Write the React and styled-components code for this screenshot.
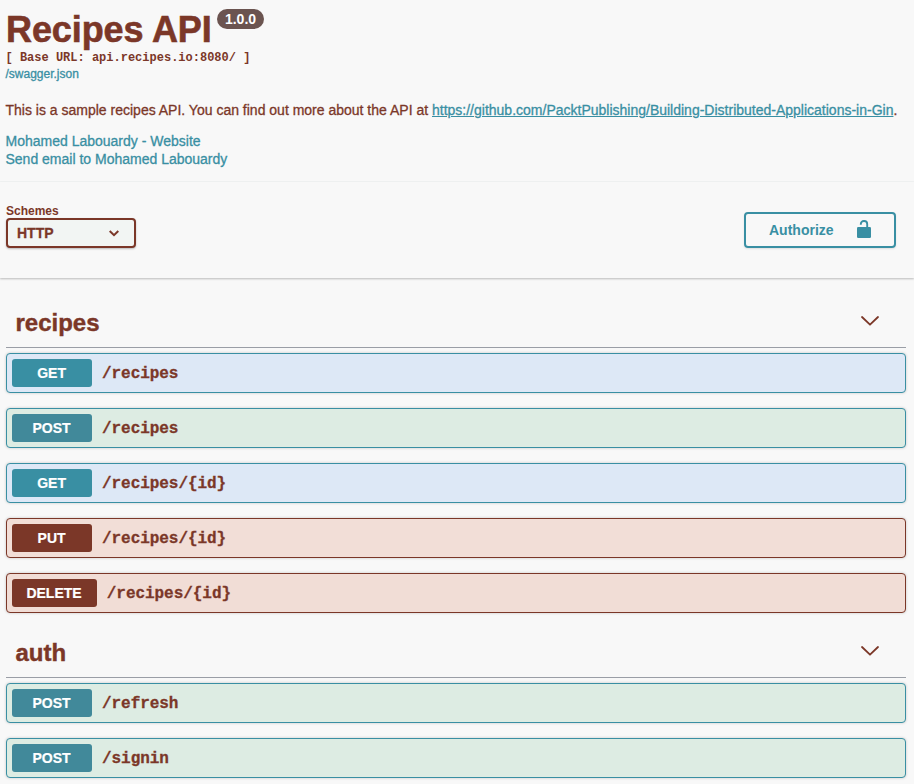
import React from "react";
import styled, { createGlobalStyle } from "styled-components";

const brown = "#7b3728";
const teal = "#398fa3";

const Global = createGlobalStyle`
  * { box-sizing: border-box; }
  body { margin: 0; background: #f8f8f8; color: ${brown}; font-family: "Liberation Sans", Arial, sans-serif; overflow: hidden; }
`;

const Page = styled.div`
  height: 784px;
  overflow: hidden;
`;

const Info = styled.header`
  height: 182px;
  padding: 9px 0 0 5.5px;
  border-bottom: 1px solid #f2f4f4;
`;

const TitleRow = styled.div`
  display: flex;
  align-items: flex-start;
  height: 41px;
`;

const Title = styled.h1`
  margin: 0;
  width: 211.5px;
  padding-left: 0.5px;
  font-size: 36px;
  line-height: 41px;
  letter-spacing: -0.1px;
  white-space: nowrap;
  -webkit-text-stroke: 0.6px ${brown};
`;

const Version = styled.span`
  width: 47px;
  height: 20px;
  border-radius: 10px;
  background: #6b5450;
  color: #fff;
  font-size: 14px;
  font-weight: 700;
  line-height: 20px;
  text-align: center;
`;

const BaseUrl = styled.pre`
  margin: 0;
  font: 700 12px/16px "Liberation Mono", monospace;
`;

const Link = styled.a`
  color: ${teal};
  -webkit-text-stroke: 0.3px ${teal};
`;

const SpecLink = styled(Link)`
  display: block;
  font-size: 12px;
  line-height: 16px;
`;

const Description = styled.p`
  margin: 20px 0 0;
  font-size: 14px;
  line-height: 17px;
  white-space: nowrap;
  -webkit-text-stroke: 0.3px ${brown};
`;

const UrlLink = styled(Link)`
  text-decoration: underline;
`;

const Contact = styled.div`
  display: flex;
  flex-direction: column;
  margin-top: 13px;
  font-size: 14px;
  line-height: 18px;
`;

const SchemeBar = styled.section`
  display: flex;
  justify-content: space-between;
  height: 96px;
  padding: 22px 18px 0 6px;
  background: #f8f8f8;
  box-shadow: 0 1px 2px rgba(0, 0, 0, 0.25);
`;

const SchemeLabel = styled.label`
  display: flex;
  flex-direction: column;
  font-size: 12px;
  font-weight: 700;
  line-height: 14px;
`;

const SchemeSelect = styled.button`
  display: flex;
  align-items: center;
  justify-content: space-between;
  width: 130px;
  height: 30px;
  padding: 0 15px 0 9px;
  border: 2px solid ${brown};
  border-radius: 4px;
  background: #f2f5f3;
  box-shadow: 0 1px 2px rgba(0, 0, 0, 0.25);
  color: ${brown};
  font: 700 14px/26px "Liberation Sans", sans-serif;
  -webkit-text-stroke: 0.3px ${brown};
`;

const AuthorizeButton = styled.button`
  display: flex;
  align-items: center;
  justify-content: space-between;
  width: 152px;
  height: 36px;
  margin-top: 8px;
  padding: 0 23px 0 23px;
  border: 2px solid ${teal};
  border-radius: 4px;
  background: transparent;
  box-shadow: 0 1px 2px rgba(0, 0, 0, 0.1);
  color: ${teal};
  font: 700 14px/32px "Liberation Sans", sans-serif;

  svg { margin-top: -2px; }
`;

const Operations = styled.main`
  padding: 20px 8px 0 6px;
`;

const TagHeader = styled.h2`
  display: flex;
  align-items: center;
  justify-content: space-between;
  height: 50px;
  margin: 0 0 5px;
  padding: 0 27px 0 9.5px;
  border-bottom: 1px solid #9a9ea6;
  font-size: 24px;
  line-height: 49px;
  -webkit-text-stroke: 0.4px ${brown};

  svg { margin-top: -3px; }
`;

const kinds = {
  GET: { accent: teal, chip: teal, fill: "#dde8f6" },
  POST: { accent: teal, chip: "#41899a", fill: "#ddece3" },
  PUT: { accent: brown, chip: brown, fill: "#f2ded7" },
  DELETE: { accent: brown, chip: brown, fill: "#f1ddd6" },
};

const Operation = styled.div`
  display: flex;
  align-items: center;
  height: 40px;
  margin-bottom: 15px;
  padding: 5px;
  border: 1px solid ${(p) => kinds[p.$kind].accent};
  border-radius: 4px;
  background: ${(p) => kinds[p.$kind].fill};
  box-shadow: 0 0 3px rgba(0, 0, 0, 0.2);
`;

const Method = styled.span`
  min-width: 80px;
  height: 28px;
  padding: 0 15.2px 0 14.4px;
  border-radius: 3px;
  background: ${(p) => kinds[p.$kind].chip};
  color: #fff;
  font-size: 14px;
  font-weight: 700;
  line-height: 28px;
  text-align: center;
  -webkit-text-stroke: 0.2px #fff;
`;

const Path = styled.span`
  padding: 1px 10px 0;
  font: 700 16px/28px "Liberation Mono", monospace;
  letter-spacing: -0.05px;
  -webkit-text-stroke: 0.3px ${brown};
`;

const sections = [
  {
    name: "recipes",
    operations: [
      ["GET", "/recipes"],
      ["POST", "/recipes"],
      ["GET", "/recipes/{id}"],
      ["PUT", "/recipes/{id}"],
      ["DELETE", "/recipes/{id}"],
    ],
  },
  {
    name: "auth",
    operations: [
      ["POST", "/refresh"],
      ["POST", "/signin"],
    ],
  },
];

const SmallChevron = () => (
  <svg width="10" height="7" viewBox="0 0 10 7" fill="none" stroke={brown} strokeWidth="2">
    <path d="M.7 1 5 5.2 9.3 1" />
  </svg>
);

const Chevron = () => (
  <svg width="18" height="10" viewBox="0 0 18 10" fill="none" stroke={brown} strokeWidth="1.8" strokeLinecap="round" strokeLinejoin="round">
    <path d="M1 1 9 8.7 17 1" />
  </svg>
);

const Unlocked = () => (
  <svg width="14" height="18" viewBox="0 0 14 18">
    <path d="M3.8 4.8V4a3 3 0 0 1 3-3h.4a3 3 0 0 1 3 3v4" fill="none" stroke={teal} strokeWidth="1.9" />
    <rect y="7" width="14" height="11" rx="1.2" fill={teal} />
  </svg>
);

export default function App() {
  return (
    <Page>
      <Global />
      <Info>
        <TitleRow>
          <Title>Recipes API</Title>
          <Version>1.0.0</Version>
        </TitleRow>
        <BaseUrl>[ Base URL: api.recipes.io:8080/ ]</BaseUrl>
        <SpecLink>/swagger.json</SpecLink>
        <Description>
          This is a sample recipes API. You can find out more about the API at{" "}
          <UrlLink>https://github.com/PacktPublishing/Building-Distributed-Applications-in-Gin</UrlLink>.
        </Description>
        <Contact>
          <Link>Mohamed Labouardy - Website</Link>
          <Link>Send email to Mohamed Labouardy</Link>
        </Contact>
      </Info>
      <SchemeBar>
        <SchemeLabel>
          Schemes
          <SchemeSelect>HTTP <SmallChevron /></SchemeSelect>
        </SchemeLabel>
        <AuthorizeButton>Authorize <Unlocked /></AuthorizeButton>
      </SchemeBar>
      <Operations>
        {sections.map((section) => (
          <section key={section.name}>
            <TagHeader>{section.name}<Chevron /></TagHeader>
            {section.operations.map(([kind, path]) => (
              <Operation key={kind + path} $kind={kind}>
                <Method $kind={kind}>{kind}</Method>
                <Path>{path}</Path>
              </Operation>
            ))}
          </section>
        ))}
      </Operations>
    </Page>
  );
}
